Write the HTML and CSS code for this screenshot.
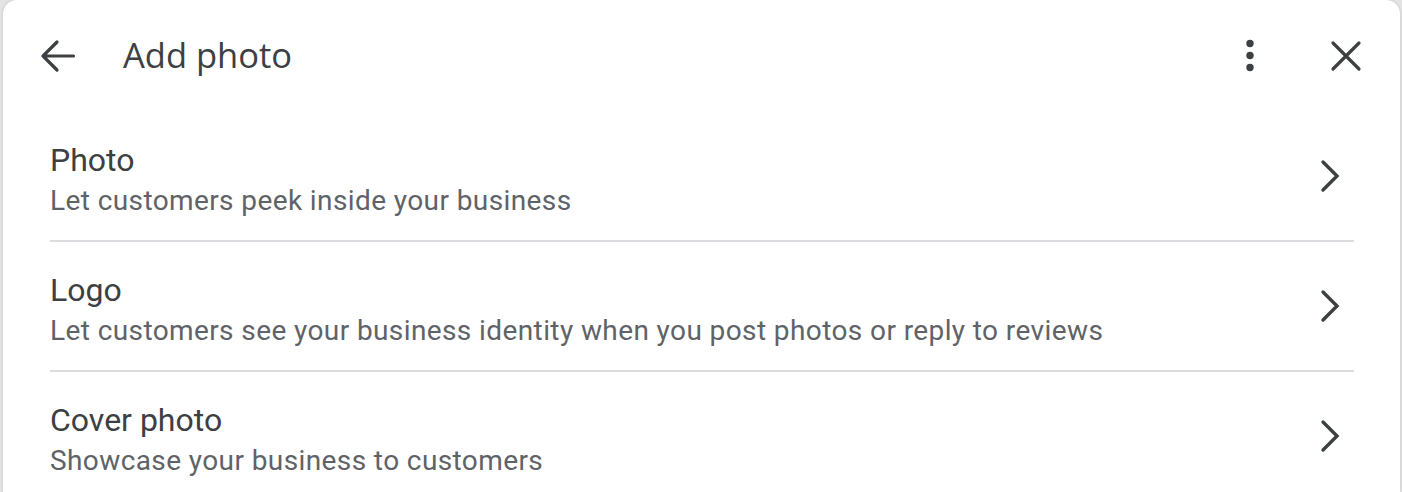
FILE: index.html
```html
<!doctype html>
<html lang="en">
<head>
	<meta charset="UTF-8">
	<title>Add photo</title>
	<link rel="stylesheet" href="styles.css">
</head>
<body>
	<div class="dialog">
		<div class="header">
			<button class="icon-btn back" aria-label="Back">
				<svg width="48" height="48" viewBox="0 0 48 48"><path d="M9 24H39.5M23 10L9 24L23 38"/></svg>
			</button>
			<h1 class="title">Add photo</h1>
			<button class="icon-btn more" aria-label="More">
				<svg width="48" height="48" viewBox="0 0 48 48"><circle cx="24" cy="11.5" r="3.7"/><circle cx="24" cy="23.5" r="3.7"/><circle cx="24" cy="35.5" r="3.7"/></svg>
			</button>
			<button class="icon-btn close" aria-label="Close">
				<svg width="48" height="48" viewBox="0 0 48 48"><path d="M11 11L37 37M37 11L11 37"/></svg>
			</button>
		</div>
		<ul class="options">
			<li class="option">
				<div class="option-text">
					<div class="option-title">Photo</div>
					<div class="option-desc">Let customers peek inside your business</div>
				</div>
				<svg class="chevron" width="48" height="48" viewBox="0 0 48 48"><path d="M17 10L31 24L17 38"/></svg>
			</li>
			<li class="option">
				<div class="option-text">
					<div class="option-title">Logo</div>
					<div class="option-desc">Let customers see your business identity when you post photos or reply to reviews</div>
				</div>
				<svg class="chevron" width="48" height="48" viewBox="0 0 48 48"><path d="M17 10L31 24L17 38"/></svg>
			</li>
			<li class="option">
				<div class="option-text">
					<div class="option-title">Cover photo</div>
					<div class="option-desc">Showcase your business to customers</div>
				</div>
				<svg class="chevron" width="48" height="48" viewBox="0 0 48 48"><path d="M17 10L31 24L17 38"/></svg>
			</li>
		</ul>
	</div>
</body>
</html>
```

FILE: styles.css
```css
html, body {
	margin: 0;
	height: 100%;
	overflow: hidden;
}
body {
	background: #e3e3e3;
	font-family: Roboto, "Liberation Sans", sans-serif;
	color: #3c4043;
}
.dialog {
	margin: 0 2px 0 3px;
	height: 100%;
	background: #fff;
	border-radius: 14px 14px 0 0;
	box-shadow: 0 0 3px rgba(0, 0, 0, 0.15);
}
.header {
	display: flex;
	align-items: center;
	height: 112px;
	padding: 0 30px 0 31px;
}
.icon-btn {
	display: flex;
	align-items: center;
	justify-content: center;
	width: 48px;
	height: 48px;
	padding: 0;
	border: none;
	background: none;
}
.icon-btn svg {
	fill: #3c4043;
	stroke: #3c4043;
	stroke-width: 3.2;
	stroke-linecap: round;
	stroke-linejoin: round;
}
.icon-btn svg circle {
	stroke: none;
}
.back svg path {
	fill: none;
}
.title {
	flex: 1;
	margin: 0 0 2px 41px;
	font-family: "Open Sans", sans-serif;
	font-size: 34.5px;
	line-height: 48px;
	font-weight: 400;
	color: #3c4043;
}
.more {
	margin-right: 48px;
}
.options {
	list-style: none;
	margin: 0;
	padding: 0 46px 0 47px;
}
.option {
	display: flex;
	align-items: flex-start;
	box-sizing: border-box;
	height: 130px;
	padding-top: 28px;
	border-bottom: 2px solid #dadce0;
}
.option-text {
	flex: 1;
}
.option-title {
	font-size: 32px;
	line-height: 40px;
	color: #3c4043;
}
.option-desc {
	margin-top: 3px;
	font-size: 28px;
	line-height: 36px;
	letter-spacing: 0.4px;
	color: #5f6368;
}
.chevron {
	align-self: center;
	margin-top: -28px;
	fill: none;
	stroke: #3c4043;
	stroke-width: 3.4;
	stroke-linecap: round;
	stroke-linejoin: miter;
}
```
